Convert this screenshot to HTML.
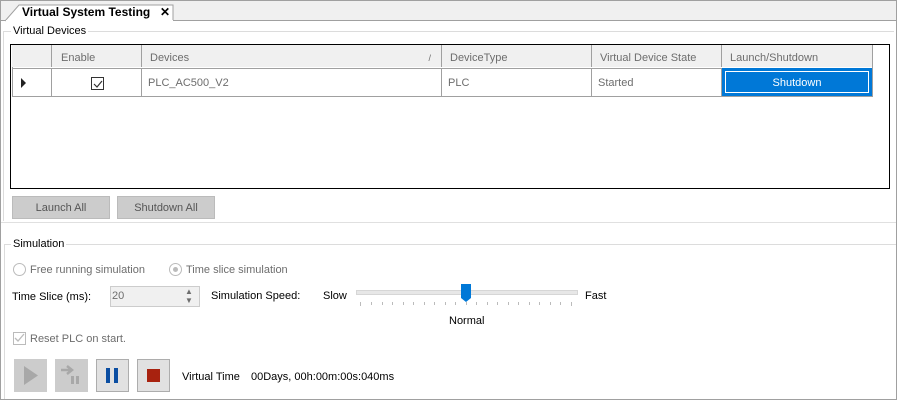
<!DOCTYPE html><html><head><style>
body{margin:0;width:897px;height:400px;overflow:hidden;background:#fff;font-family:"Liberation Sans",sans-serif;font-size:11px;color:#000;position:relative}
.a{position:absolute}
.t{position:absolute;white-space:nowrap}
.g{color:#6d6d6d}
.hc{position:absolute;top:0;height:22px;border-right:1px solid #a0a0a0;background:#f0f0f0;color:#6d6d6d;line-height:26px;box-sizing:border-box;padding-left:8px}
.rc{position:absolute;top:23px;height:28px;border-right:1px solid #a0a0a0;color:#6d6d6d;line-height:31px;box-sizing:border-box;padding-left:6px}
.btn{position:absolute;background:#ccc;border:1px solid #bbb;color:#555;text-align:center;line-height:22px;box-sizing:border-box}
.ib{position:absolute;top:359px;width:33px;height:33px;box-sizing:border-box;border:1px solid #adadad;background:#e1e1e1}
</style></head><body>
<div class="a" style="left:0;top:0;width:897px;height:400px;border:1px solid #a0a0a0;box-sizing:border-box"></div>
<div class="a" style="left:1px;top:1px;width:895px;height:19px;background:#f0f0f0;border-bottom:1px solid #a0a0a0"></div>
<svg class="a" style="left:5px;top:2px" width="172" height="20"><path d="M0 19 L14 3 L168 3 L168 19" fill="#fff" stroke="#a0a0a0"/><rect x="1" y="18" width="167" height="3" fill="#fff"/></svg>
<div class="t" style="left:22px;top:5px;font-weight:bold;font-size:12px">Virtual System Testing</div>
<div class="t" style="left:160px;top:5px;font-weight:bold;font-size:12px">✕</div>
<div class="a" style="left:3px;top:31px;width:891px;border-top:1px solid #dcdcdc"></div>
<div class="a" style="left:3px;top:31px;height:190px;border-left:1px solid #dcdcdc"></div>
<div class="t" style="left:11px;top:25px;background:#fff;padding:0 2px">Virtual Devices</div>
<div class="a" style="left:10px;top:44px;width:880px;height:145px;border:1px solid #000;box-sizing:border-box">
 <div class="a" style="left:1px;top:1px;width:861px;height:51px;border:1px solid #a0a0a0;border-top:0;box-sizing:border-box"></div>
 <div class="a" style="left:1px;top:23px;width:861px;border-top:1px solid #a0a0a0"></div>
 <div class="hc" style="left:1px;width:40px"></div>
 <div class="hc" style="left:41px;width:90px;padding-left:9px">Enable</div>
 <div class="hc" style="left:131px;width:300px">Devices<span style="position:absolute;right:10px;font-size:9px">/</span></div>
 <div class="hc" style="left:431px;width:150px">DeviceType</div>
 <div class="hc" style="left:581px;width:130px">Virtual Device State</div>
 <div class="hc" style="left:711px;width:151px">Launch/Shutdown</div>
 <div class="rc" style="left:1px;width:40px"><svg width="8" height="10" style="position:absolute;left:8px;top:10px"><path d="M1 0 L6 5 L1 10Z" fill="#222"/></svg></div>
 <div class="rc" style="left:41px;width:90px"><div class="a" style="left:39px;top:9px;width:11px;height:11px;border:1px solid #333"></div><svg class="a" style="left:40px;top:10px" width="12" height="12"><path d="M2 6 L5 9 L10 3" fill="none" stroke="#333" stroke-width="1.2"/></svg></div>
 <div class="rc" style="left:131px;width:300px">PLC_AC500_V2</div>
 <div class="rc" style="left:431px;width:150px">PLC</div>
 <div class="rc" style="left:581px;width:130px">Started</div>
 <div class="a" style="left:711px;top:23px;width:150px;height:28px;background:#0078d7"><div class="a" style="left:3px;top:3px;width:142px;height:20px;border:1px solid #fff;color:#fff;text-align:center;line-height:22px">Shutdown</div></div>
</div>
<div class="btn" style="left:12px;top:196px;width:98px;height:23px">Launch All</div>
<div class="btn" style="left:117px;top:196px;width:98px;height:23px">Shutdown All</div>
<div class="a" style="left:1px;top:222px;width:895px;border-top:1px solid #e0e0e0"></div>
<div class="a" style="left:4px;top:244px;width:892px;border-top:1px solid #dcdcdc"></div>
<div class="a" style="left:4px;top:244px;height:155px;border-left:1px solid #dcdcdc"></div>
<div class="t" style="left:11px;top:238px;background:#fff;padding:0 2px">Simulation</div>
<div class="a" style="left:13px;top:263px;width:11px;height:11px;border:1px solid #bbb;border-radius:50%"></div>
<div class="t g" style="left:30px;top:264px">Free running simulation</div>
<div class="a" style="left:169px;top:263px;width:11px;height:11px;border:1px solid #bbb;border-radius:50%"></div>
<div class="a" style="left:173px;top:267px;width:5px;height:5px;background:#bbb;border-radius:50%"></div>
<div class="t g" style="left:186px;top:264px">Time slice simulation</div>
<div class="t" style="left:12px;top:291px">Time Slice (ms):</div>
<div class="a" style="left:110px;top:286px;width:90px;height:21px;border:1px solid #ccc;background:#f0f0f0;box-sizing:border-box"><span class="t g" style="left:1px;top:3px">20</span><span class="t g" style="left:74px;top:0;font-size:8px;line-height:9px">▲<br>▼</span></div>
<div class="t" style="left:211px;top:290px">Simulation Speed:</div>
<div class="t" style="left:323px;top:290px">Slow</div>
<div class="a" style="left:356px;top:290px;width:220px;height:3px;background:#e7e7e7;border:1px solid #d6d6d6"></div>
<svg class="a" style="left:360px;top:302px" width="215" height="6"><g stroke="#bbb"><path d="M0.5 0v4M11.5 0v3M22.5 0v3M32.5 0v3M43.5 0v3M53.5 0v3M64.5 0v3M74.5 0v3M85.5 0v3M95.5 0v3M106.5 0v3M116.5 0v3M127.5 0v3M137.5 0v3M148.5 0v3M158.5 0v3M169.5 0v3M179.5 0v3M190.5 0v3M200.5 0v3M211.5 0v4"/></g></svg>
<svg class="a" style="left:460px;top:284px" width="12" height="19"><path d="M1 0H11V14L6 18L1 14Z" fill="#0078d7"/></svg>
<div class="t" style="left:585px;top:290px">Fast</div>
<div class="t" style="left:449px;top:315px">Normal</div>
<div class="a" style="left:13px;top:332px;width:11px;height:11px;border:1px solid #bbb"></div>
<svg class="a" style="left:13px;top:332px" width="13" height="13"><path d="M2 6 L5 9 L11 2" fill="none" stroke="#bbb" stroke-width="1.3"/></svg>
<div class="t g" style="left:30px;top:333px">Reset PLC on start.</div>
<div class="ib" style="left:14px;background:#ccc;border-color:#ccc"><svg width="31" height="31"><path d="M9 6 L23 15.5 L9 25Z" fill="#a8a8a8"/></svg></div>
<div class="ib" style="left:55px;background:#ccc;border-color:#ccc"><svg width="31" height="31"><path d="M5 10h9M11 6l5 4-5 4" fill="none" stroke="#a8a8a8" stroke-width="2.5"/><rect x="15" y="16" width="3" height="8" fill="#a8a8a8"/><rect x="20" y="16" width="3" height="8" fill="#a8a8a8"/></svg></div>
<div class="ib" style="left:96px"><svg width="31" height="31"><rect x="9" y="8" width="4" height="15" fill="#0b4ea2"/><rect x="17" y="8" width="4" height="15" fill="#0b4ea2"/></svg></div>
<div class="ib" style="left:137px"><svg width="31" height="31"><rect x="9" y="9" width="13" height="13" fill="#a8220f"/></svg></div>
<div class="t" style="left:182px;top:371px">Virtual Time</div>
<div class="t" style="left:251px;top:371px">00Days, 00h:00m:00s:040ms</div>
</body></html>
